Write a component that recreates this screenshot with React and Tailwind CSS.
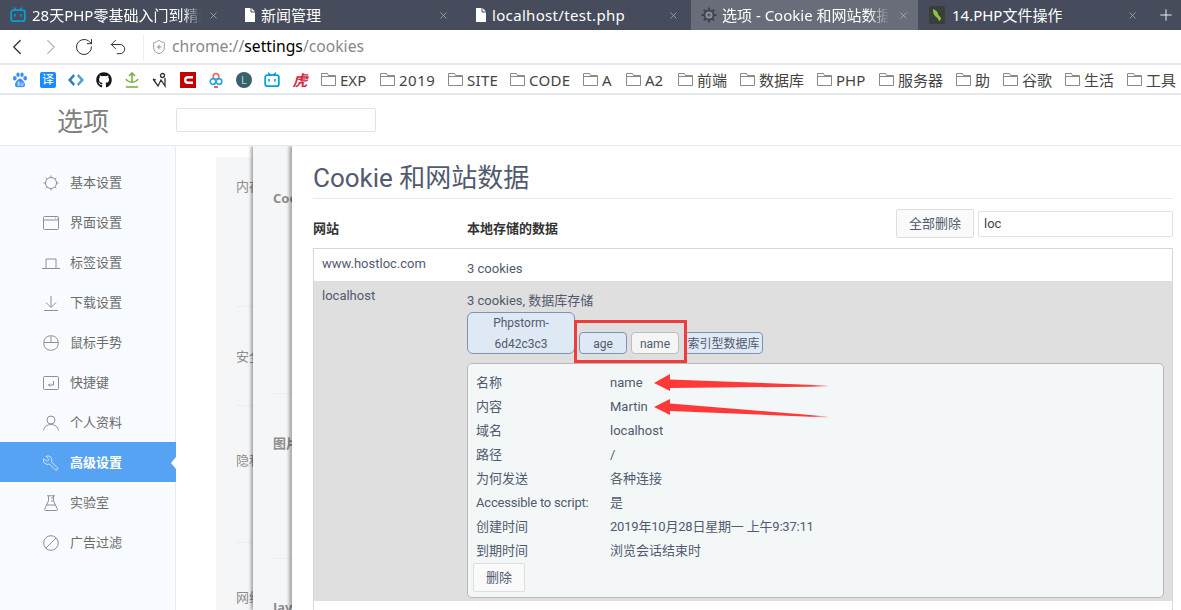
import React from "react";
import { FaGithub } from "react-icons/fa";
import { Plus, X, ChevronLeft, ChevronRight, RotateCw, Undo2, ShieldPlus, Wrench } from "lucide-react";

const FONT = "font-['Noto_Sans','Noto_Sans_CJK_SC',sans-serif]";
const BODY = "font-['Roboto','Noto_Sans_CJK_SC',sans-serif]";

function Bili({ size = 16, color = "#00a1d6" }) {
  return (
    <svg width={size} height={size} viewBox="0 0 16 16" fill="none">
      <path d="M4.5 1 L6.5 3 M11.5 1 L9.5 3" stroke={color} strokeWidth="1.4" strokeLinecap="round" />
      <rect x="1.2" y="3.2" width="13.6" height="11" rx="2" stroke={color} strokeWidth="1.8" />
      <path d="M5 7.5v1.6M11 7.5v1.6" stroke={color} strokeWidth="1.6" strokeLinecap="round" />
    </svg>
  );
}

function Doc() {
  return (
    <svg width="12" height="14" viewBox="0 0 12 14">
      <path d="M1 0h6.5L11 3.5V14H1z" fill="#fff" />
      <path d="M7 0v4h4" fill="none" stroke="#464c5b" strokeWidth="1" />
    </svg>
  );
}

function Gear() {
  return (
    <svg width="16" height="16" viewBox="0 0 16 16" fill="none">
      <path d="M8 0.5v3M8 12.5v3M0.5 8h3M12.5 8h3M2.7 2.7l2 2M11.3 11.3l2 2M13.3 2.7l-2 2M4.7 11.3l-2 2" stroke="#3f434c" strokeWidth="1.8" />
      <circle cx="8" cy="8" r="5.5" fill="#3f434c" />
      <circle cx="8" cy="8" r="3.6" fill="#8d919b" />
      <circle cx="8" cy="8" r="1.8" fill="#565a65" />
    </svg>
  );
}

function Leaf() {
  return (
    <svg width="16" height="18" viewBox="0 0 16 18">
      <rect width="16" height="18" rx="2" fill="#3a3f3c" />
      <path d="M4 3c3 1 5 3 5 5 0 1 2 2 3 4 0 1-1 3-2 3-1-3-3-4-4-5-2-2-2-5-2-7z" fill="#8cc63f" />
    </svg>
  );
}

const tabs = [
  { w: "w-[231px]", icon: <Bili />, pad: "pl-[10px] gap-[6px]", text: "28天PHP零基础入门到精通", close: "right-[12px]", fade: true },
  { w: "w-[230px]", icon: <Doc />, pad: "pl-[13px] gap-[5px]", text: "新闻管理", close: "right-[12px]" },
  { w: "w-[230px]", icon: <Doc />, pad: "pl-[14px] gap-[5px]", text: "localhost/test.php", close: "right-[12px]", track: "tracking-[0.33px]" },
  { w: "w-[227px]", icon: <Gear />, pad: "pl-[10px] gap-[5px]", text: "选项 - Cookie 和网站数据", close: "right-[9px]", active: true, fade: true },
  { w: "w-[230px]", icon: <Leaf />, pad: "pl-[11px] gap-[7px]", text: "14.PHP文件操作", close: "right-[10px]" },
];

function Tab({ t }) {
  return (
    <div className={`relative h-[30px] shrink-0 flex items-center ${t.w} ${t.pad} ${t.active ? "bg-[#686d79]" : ""}`}>
      <span className="shrink-0 flex items-center">{t.icon}</span>
      <span className={`text-[15px] text-white whitespace-nowrap overflow-hidden ${t.track || ""} ${t.active ? "max-w-[167px]" : "max-w-[170px]"}`}
        style={t.fade ? { maskImage: "linear-gradient(to right,#000 88%,transparent)" } : undefined}>
        {t.text}
      </span>
      <X size={11} strokeWidth={1.3} className={`absolute ${t.close} top-[10px] text-[#c5c8ce]`} />
    </div>
  );
}

function Folder() {
  return (
    <svg width="15" height="13" viewBox="0 0 15 13" fill="none" className="shrink-0">
      <path d="M0.5 12.5V0.5H6.5L7.5 2.5H14.5V12.5Z" stroke="#8a8a8a" />
      <path d="M0.5 3.5H14.5" stroke="#8a8a8a" />
    </svg>
  );
}

const folders = [
  ["EXP", "w-[27px]"], ["2019", "w-[36px] tracking-[0.5px]"], ["SITE", "w-[30px] tracking-[0.3px]"], ["CODE", "w-[41px] tracking-[0.3px]"],
  ["A", "w-[11px]"], ["A2", "w-[20px]"], ["前端", "w-[30px]"], ["数据库", "w-[45px]"], ["PHP", "w-[30px]"], ["服务器", "w-[45px]"],
  ["助", "w-[15px]"], ["谷歌", "w-[30px]"], ["生活", "w-[30px]"], ["工具", "w-[30px]"],
];

const BM = ({ children }) => <span className="w-[28px] h-[18px] shrink-0 flex items-center justify-center">{children}</span>;

function Bookmarks() {
  return (
    <div className="h-[30px] pt-[1px] shrink-0 bg-white border-b-2 border-[#e6e8ec] flex items-center pl-[6px] pr-0 overflow-hidden">
      <BM>
        <svg width="16" height="16" viewBox="0 0 16 16" fill="#3d8ef5">
          <ellipse cx="2.8" cy="6.2" rx="1.8" ry="2.2" /><ellipse cx="6" cy="2.8" rx="1.7" ry="2.3" /><ellipse cx="10" cy="2.8" rx="1.7" ry="2.3" /><ellipse cx="13.2" cy="6.2" rx="1.8" ry="2.2" />
          <path d="M8 6.5c2 0 5 4 5 6.5 0 2-2 2.500-5 2-3 .5-5 0-5-2 0-2.500 3-6.500 5-6.500z" />
          <path d="M6 10v3.500h1.200V10zM9 10.500v2.500c0 1 2 1 2 0v-2.500" fill="none" stroke="#fff" strokeWidth=".7" />
        </svg>
      </BM>
      <BM><span className="w-[16px] h-[16px] rounded-[2px] bg-[#1a8cff] text-white text-[12px] leading-[16px] text-center">译</span></BM>
      <BM>
        <svg width="16" height="12" viewBox="0 0 16 12" fill="#2f7fb8">
          <path d="M5.500 0 L0 6 L5.500 12 L7 10 L3.500 6 L7 2Z" /><path d="M10.500 0 L16 6 L10.500 12 L9 10 L12.500 6 L9 2Z" fill="#4aa3df" />
        </svg>
      </BM>
      <BM><FaGithub size={16} color="#161616" /></BM>
      <BM>
        <svg width="14" height="16" viewBox="0 0 14 16" fill="none" stroke="#7cb342" strokeWidth="1.600">
          <path d="M7 11V1M4 4l3-3 3 3M1 7c1 2 3 3 6 3s5-1 6-3" /><path d="M1 15h12" />
        </svg>
      </BM>
      <BM>
        <svg width="16" height="16" viewBox="0 0 16 16" fill="none" stroke="#333" strokeWidth="1.300">
          <circle cx="10.500" cy="3.500" r="2" /><path d="M1 7l5 7 3-6 4 6V6M1 7l3 1" />
        </svg>
      </BM>
      <BM>
        <svg width="16" height="16" viewBox="0 0 16 16">
          <rect width="16" height="16" fill="#c40000" />
          <path d="M13 5.200H8a2.800 2.800 0 0 0 0 5.600h5" fill="none" stroke="#fff" strokeWidth="2.400" />
        </svg>
      </BM>
      <BM>
        <svg width="16" height="16" viewBox="0 0 16 16" fill="none" strokeWidth="1.700">
          <circle cx="8" cy="4.500" r="2.800" stroke="#ef6c6c" /><circle cx="5" cy="9.500" r="2.800" stroke="#27a7e0" /><circle cx="11" cy="9.500" r="2.800" stroke="#27a7e0" />
          <path d="M6 15h4" stroke="#e05050" />
        </svg>
      </BM>
      <BM>
        <span className="w-[16px] h-[16px] rounded-full bg-[#37616b] text-[#b9cdd1] text-[11px] leading-[16px] text-center">L</span>
      </BM>
      <BM><Bili size={16} /></BM>
      <BM><span className="text-[15px] leading-[18px] font-bold italic text-[#cf2b3f]">虎</span></BM>
      <div className="flex items-center gap-[13px] ml-[7px]">
        {folders.map(([f, w]) => (
          <div key={f} className="flex items-center gap-[4px] shrink-0">
            <Folder />
            <span className={`text-[15px] leading-[20px] text-[#444] whitespace-nowrap ${w}`}>{f}</span>
          </div>
        ))}
      </div>
    </div>
  );
}

const S = { width: 16, height: 16, viewBox: "0 0 16 16", fill: "none", stroke: "#8f8f8f", strokeWidth: 1 };
const icons = {
  gear: (
    <svg {...S}><circle cx="8" cy="8" r="5.500" /><path d="M8 .5v2M8 13.500v2M.5 8h2M13.500 8h2M2.700 2.700l1.400 1.400M11.900 11.900l1.400 1.400M13.300 2.700l-1.400 1.400M4.100 11.900l-1.400 1.400" /></svg>
  ),
  win: (
    <svg {...S}><rect x=".5" y="1.500" width="15" height="13" rx="1" /><path d="M.5 5h15M12 3.200h.8M14 3.200h.6" /></svg>
  ),
  laptop: (
    <svg {...S} className="overflow-visible"><path d="M3 13V4h10v9M-1 13.500h18" /></svg>
  ),
  down: (
    <svg {...S}><path d="M8 1v11M3 7.500 8 12.500l5-5M1 15.500h14" /></svg>
  ),
  mouse: (
    <svg {...S}><rect x=".8" y=".8" width="14.400" height="14.400" rx="6.500" /><path d="M.8 7.500h14.400M8 .8v6.700" /></svg>
  ),
  key: (
    <svg {...S}><rect x=".5" y="1.500" width="15" height="13" rx="1" /><path d="M10.500 6v4h-5M7 8.500 5.500 10 7 11.500" /></svg>
  ),
  user: (
    <svg {...S}><circle cx="8" cy="5" r="4" /><path d="M.5 15.500c.5-3.500 3.500-6 7.500-6s7 2.500 7.500 6" /></svg>
  ),
  wrench: <Wrench size={18} strokeWidth={1} color="#fff" className="-scale-x-100 -ml-[1px] -mt-[1px]" />,
  lab: (
    <svg {...S}><path d="M4 .8h8M5.500 .8v5L1.500 14.500c-.2.500.2 1 .8 1h11.400c.6 0 1-.5.8-1L10.500 5.800v-5M3.800 10h8.400M8 3h2.500M8 6h2.500" /></svg>
  ),
  ban: (
    <svg {...S}><circle cx="8" cy="8" r="7.300" /><path d="M3 13 13 3" /></svg>
  ),
};

const nav = [
  ["gear", "基本设置"], ["win", "界面设置"], ["laptop", "标签设置"], ["down", "下载设置"], ["mouse", "鼠标手势"],
  ["key", "快捷键"], ["user", "个人资料"], ["wrench", "高级设置", true], ["lab", "实验室"], ["ban", "广告过滤"],
];

function Sidebar() {
  return (
    <div className="w-[176px] shrink-0 bg-[#f8fbff] border-r border-[#e8eaec] pt-[16px]">
      {nav.map(([ic, label, active]) => (
        <div key={label} className={`relative h-[40px] flex items-center pl-[43px] pt-[2px] gap-[11px] ${active ? "bg-[#57a3f3] mr-[-1px]" : ""}`}>
          <span className="w-[16px] h-[16px] flex">{icons[ic]}</span>
          <span className={`text-[13px] ${active ? "text-white font-bold" : "text-[#6b6b6b]"}`}>{label}</span>
          {active && <span className="absolute right-0 top-[15px] w-0 h-0 border-y-[6px] border-y-transparent border-r-[5px] border-r-white" />}
        </div>
      ))}
    </div>
  );
}

function Chip({ children, active, className = "" }) {
  return (
    <div className={`h-[22px] pt-[1px] flex items-center justify-center rounded-[4px] border text-[12px] text-[#515a6e] ${active ? "bg-[#dfe8f5] border-[#8092b3]" : "bg-[#f5f5f5] border-[#bdbdbd]"} ${className}`}>
      {children}
    </div>
  );
}

const details = [
  ["名称", "name"], ["内容", "Martin"], ["域名", "localhost"], ["路径", "/"], ["为何发送", "各种连接"],
  ["Accessible to script:", "是", "tracking-[-0.2px]"], ["创建时间", "2019年10月28日星期一 上午9:37:11", "", "tracking-[-0.2px]"], ["到期时间", "浏览会话结束时"],
];

function Arrows() {
  return (
    <svg className="absolute left-[654px] top-[373px]" width="176" height="46" viewBox="0 0 176 46">
      <defs>
        <linearGradient id="tail" x1="0" x2="1" y1="0" y2="0">
          <stop offset="0.9" stopColor="#ff3838" />
          <stop offset="1" stopColor="#ff3838" stopOpacity="0.2" />
        </linearGradient>
      </defs>
      <path d="M0 10 L16 1 L16 6.500 L174 12.500 L174 13.500 L16 15 L16 18Z" fill="url(#tail)" />
      <path d="M0 34 L16 26 L16 30.500 L174 43.500 L174 44.500 L16 38 L16 42Z" fill="url(#tail)" />
    </svg>
  );
}

function CookiePanel() {
  return (
    <div className={`absolute left-[116px] top-0 bottom-0 right-0 bg-white shadow-[-3px_0_3px_rgba(0,0,0,0.3)] pl-[21px] pr-[8px] pt-[13px] text-[#444] ${BODY}`}>
      <h1 className="text-[26px] leading-[38px] font-normal text-[#515a6e] border-b border-[#e8eaec] h-[40px]">Cookie 和网站数据</h1>
      <div className="flex items-center h-[49px]">
        <div className="w-[154px] pt-[10px] text-[13px] font-bold text-[#333]">网站</div>
        <div className="pt-[10px] text-[13px] font-bold text-[#333]">本地存储的数据</div>
        <button className="ml-auto w-[78px] h-[29px] border border-[#dcdee2] bg-[#fafafa] rounded-[2px] text-[13px] text-[#515a6e]">全部删除</button>
        <div className="ml-[4px] w-[195px] h-[26px] border border-[#e3e3e3] rounded-[2px] text-[13px] pl-[5px] leading-[24px] text-[#444] bg-white">loc</div>
      </div>
      <div className="border border-[#d7d7d7] border-b-0 h-[400px]">
        <div className="h-[32px] flex bg-white text-[13px]">
          <div className="w-[153px] pl-[8px] pt-[5px] text-[#515a6e]">www.hostloc.com</div>
          <div className="pt-[10px] text-[#515a6e]">3 cookies</div>
        </div>
        <div className="h-[320px] bg-[#dfdfdf] flex text-[13px]">
          <div className="w-[153px] pl-[8px] pt-[5px] text-[#515a6e]">localhost</div>
          <div className="flex-1 pr-[8px]">
            <div className="h-[31px] pt-[10px] leading-[20px] text-[#515a6e]">3 cookies, 数据库存储</div>
            <div className="flex items-end gap-[4px]">
              <Chip active className="w-[108px] !h-[42px] !rounded-[6px] text-center leading-[21px]">
                <span className="w-[80px]">Phpstorm-6d42c3c3</span>
              </Chip>
              <Chip active className="w-[48px]">age</Chip>
              <Chip className="w-[48px]">name</Chip>
              <Chip active className="w-[79px] ml-[1px]">索引型数据库</Chip>
            </div>
            <div className="relative mt-[9px] h-[235px] rounded-[5px] border border-[#b9b9b9] bg-[#f3f7f8] pl-[8px] pt-[7px] text-[#515a6e]">
              {details.map(([k, v, kc = "", vc = ""]) => (
                <div key={k} className="h-[24px] flex items-center">
                  <span className={`w-[134px] shrink-0 whitespace-nowrap ${kc}`}>{k}</span>
                  <span className={`whitespace-nowrap ${vc}`}>{v}</span>
                </div>
              ))}
              <button className="ml-[-3px] w-[52px] h-[29px] block border border-[#dcdee2] bg-[#fafafa] rounded-[2px] text-[#515a6e]">删除</button>
            </div>
          </div>
        </div>
        <div className="h-[47px] bg-white" />
      </div>
    </div>
  );
}

function SideLabel({ top, children, cls = "" }) {
  return <div className={`absolute text-[13px] font-bold text-[#8d8d8d] whitespace-nowrap ${cls}`} style={{ top }}>{children}</div>;
}

export default function App() {
  return (
    <div className={`w-[1181px] h-[610px] overflow-hidden flex flex-col bg-white ${FONT}`}>
      <div className="h-[30px] shrink-0 bg-[#464c5b] flex relative">
        {tabs.map((t) => <Tab key={t.text} t={t} />)}
        <Plus size={18} strokeWidth={1.2} className="absolute left-[1157px] top-[6px] text-white" />
      </div>
      <div className="h-[35px] shrink-0 bg-white border-b-2 border-[#e6e8ec] flex items-center text-[#333]">
        <ChevronLeft size={26} strokeWidth={1.200} className="ml-[4px] text-[#333]" />
        <ChevronRight size={26} strokeWidth={1.200} className="ml-[8px] text-[#bbb]" />
        <RotateCw size={20} strokeWidth={1.200} className="ml-[10px]" />
        <Undo2 size={20} strokeWidth={1.200} className="ml-[14px]" />
        <div className="ml-[15px] h-[26px] border-l border-[#eee]" />
        <ShieldPlus size={16} strokeWidth={1.100} className="ml-[7px] text-[#777]" />
        <div className="ml-[5px] text-[15.7px] text-[#888]">chrome://<span className="text-black">settings</span>/cookies</div>
      </div>
      <Bookmarks />
      <div className="h-[51px] pt-[2px] shrink-0 bg-white border-b border-[#e8eaec] flex items-center">
        <div className="w-[176px] pl-[57px] text-[26px] text-[#808080]">选项</div>
        <div className="w-[200px] h-[24px] -mt-[2px] border border-[#e3e3e3] rounded-[2px] bg-white" />
      </div>
      <div className="flex-1 min-h-0 flex">
        <Sidebar />
        <div className="relative flex-1 overflow-hidden bg-white">
          <div className="absolute left-[40px] top-[11px] bottom-0 w-[60px] bg-[#f5f6f8]">
            <SideLabel top={20} cls="left-[20px] font-normal">内存</SideLabel>
            <SideLabel top={190} cls="left-[20px] font-normal">安全</SideLabel>
            <SideLabel top={294} cls="left-[20px] font-normal">隐私</SideLabel>
            <SideLabel top={431} cls="left-[20px] font-normal">网络</SideLabel>
            <div className="absolute left-[20px] right-0 top-[149px] h-px bg-[#eceef1]" />
            <div className="absolute left-[20px] right-0 top-[248px] h-px bg-[#eceef1]" />
            <div className="absolute left-[20px] right-0 top-[385px] h-px bg-[#eceef1]" />
          </div>
          <div className="absolute left-[77px] top-0 bottom-0 w-[60px] bg-[#f5f6f8] shadow-[-2px_0_3px_rgba(0,0,0,0.35)]">
            <SideLabel top={43} cls="left-[20px]">Cookie</SideLabel>
            <SideLabel top={288} cls="left-[20px]">图片</SideLabel>
            <SideLabel top={452} cls="left-[20px]">JavaScript</SideLabel>
            <div className="absolute left-[20px] right-0 top-[247px] h-px bg-[#eceef1]" />
            <div className="absolute left-[20px] right-0 top-[412px] h-px bg-[#eceef1]" />
          </div>
          <CookiePanel />
        </div>
      </div>
      <Arrows />
      <div className="absolute left-[574px] top-[320px] w-[113px] h-[43px] border-[3px] border-[#f23b3b]" />
    </div>
  );
}
